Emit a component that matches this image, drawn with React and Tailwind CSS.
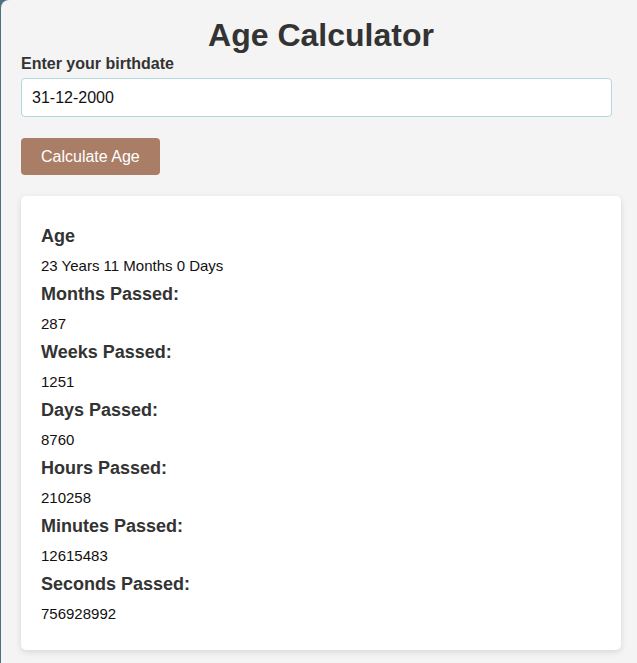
import React, { useState } from 'react';

const results = [
    { label: 'Age', value: '23 Years 11 Months 0 Days' },
    { label: 'Months Passed:', value: '287' },
    { label: 'Weeks Passed:', value: '1251' },
    { label: 'Days Passed:', value: '8760' },
    { label: 'Hours Passed:', value: '210258' },
    { label: 'Minutes Passed:', value: '12615483' },
    { label: 'Seconds Passed:', value: '756928992' },
];

const App = () => {
    const [birthdate, setBirthdate] = useState('31-12-2000');

    return (
        <div className="min-h-screen bg-[#4f7082] pl-px" style={{ fontFamily: '"Liberation Sans", Arial, sans-serif' }}>
            <div className="min-h-screen bg-[#f4f4f4] rounded-tl-[8px] pl-[20px] pt-[17px] pb-6">
                <div className="w-[600px]">
                    <h1 className="text-center text-[32px] leading-[37px] font-bold text-[#333]">Age Calculator</h1>

                    <label className="block mt-px text-[16px] leading-[18px] font-bold text-[#333]">Enter your birthdate</label>
                    <input
                        type="text"
                        className="block mt-[5px] w-[591px] h-[39px] px-[10px] bg-white border border-[#b3d7de] rounded-[4px] text-[16px] text-[#111] outline-none"
                        value={birthdate}
                        onChange={e => setBirthdate(e.target.value)}
                    />

                    <button className="mt-[21px] h-[37px] px-5 bg-[#aa7d66] text-white text-[16px] rounded-[4px]">
                        Calculate Age
                    </button>

                    <div className="mt-[21px] bg-white rounded-[5px] shadow-[0_2px_6px_rgba(0,0,0,0.12)] px-5 pt-[29px] pb-[26px]">
                        <div className="flex flex-col gap-[7px]">
                            {results.map(r => (
                                <div key={r.label}>
                                    <h3 className="text-[18px] leading-[22px] font-bold text-[#333]">{r.label}</h3>
                                    <p className="mt-[9px] text-[15px] leading-[20px] text-[#111]">{r.value}</p>
                                </div>
                            ))}
                        </div>
                    </div>
                </div>
            </div>
        </div>
    );
};

export default App;
